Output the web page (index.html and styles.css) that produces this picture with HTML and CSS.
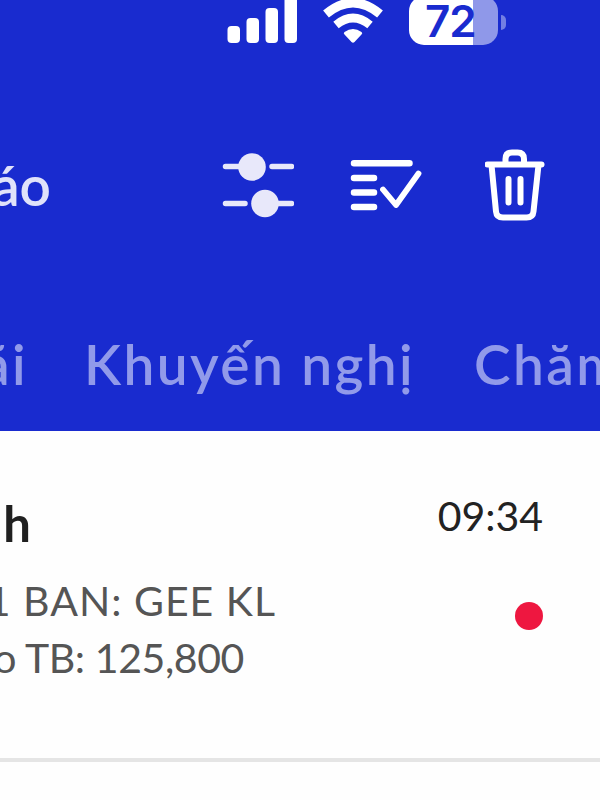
FILE: index.html
```
<!DOCTYPE html>
<html lang="vi">
<head>
    <meta charset="UTF-8">
    <title>Thông báo</title>
    <link rel="stylesheet" href="styles.css">
</head>
<body>
<div class="header">
    <div class="status-bar">
        <svg class="signal" width="70" height="60" viewBox="227 0 70 60" fill="#fff">
            <rect x="227.500" y="26" width="12.500" height="17" rx="4"/>
            <rect x="246.500" y="18" width="12.500" height="25" rx="4"/>
            <rect x="265.500" y="8" width="12.500" height="35" rx="4"/>
            <rect x="284.500" y="-4" width="12.500" height="47" rx="4"/>
        </svg>
        <svg class="wifi" width="62" height="60" viewBox="322 0 62 60">
            <path d="M326 14Q353 -8.500 380 14" fill="none" stroke="#fff" stroke-width="9" stroke-linejoin="round"/>
            <path d="M336 25Q353 11 370 25" fill="none" stroke="#fff" stroke-width="8.500"/>
            <path d="M344.500 34.500Q343 33 344.500 32Q353 26 361.500 32Q363 33 361.500 34.500L354.500 42Q353 43.500 351.500 42Z" fill="#fff"/>
        </svg>
        <div class="battery">
            <span class="battery-level">72</span>
            <span class="battery-cap"></span>
        </div>
    </div>
    <div class="toolbar">
        <span class="page-title">áo</span>
        <svg class="icon-filter" width="72" height="80" viewBox="222 145 72 80" fill="#e8e8fa" stroke="#e8e8fa" stroke-width="5.500" stroke-linecap="round">
            <path d="M225.500 166.500H245M272 166.500H291.500M225.500 203.500H245M270 203.500H291.500"/>
            <circle cx="252" cy="167" r="13.800" stroke="none"/>
            <circle cx="265" cy="203.500" r="13.800" stroke="none"/>
        </svg>
        <svg class="icon-read" width="72" height="80" viewBox="350 145 72 80" fill="none" stroke="#fff" stroke-width="6.500" stroke-linecap="round" stroke-linejoin="round">
            <path d="M354 163.300H409.500M354 178H374M354 192.500H374M354 207H374"/>
            <path d="M383 189.500L396 205L418.500 173.500" stroke-width="5.800"/>
        </svg>
        <svg class="icon-trash" width="60" height="80" viewBox="485 145 60 80" fill="none" stroke="#fff" stroke-width="6" stroke-linecap="round" stroke-linejoin="round">
            <path d="M487.500 164.500H541.500"/>
            <path d="M505.500 163V159Q505.500 152.500 512 152.500H517.500Q524 152.500 524 159V163"/>
            <path d="M491.500 165L496 211.500Q496.500 217.500 503 217.500H526.500Q533 217.500 533.500 211.500L538.500 165"/>
            <path d="M508.500 179V202.500M520.500 179V202.500"/>
        </svg>
    </div>
    <div class="tabs">
        <span class="tab tab-prev">ãi</span>
        <span class="tab tab-promo">Khuyến nghị</span>
        <span class="tab">Chăm</span>
    </div>
</div>
<div class="notice">
    <div class="notice-head">
        <span class="notice-title">h</span>
        <span class="notice-time">09:34</span>
    </div>
    <div class="notice-body">
        <div class="notice-text">
            <div class="line line-account">1 BAN: GEE KL</div>
            <div class="line line-amount">o TB: 125,800</div>
        </div>
        <span class="unread-dot"></span>
    </div>
</div>
</body>
</html>
```
FILE: styles.css
```
body {
    margin: 0;
    width: 600px;
    height: 800px;
    overflow: hidden;
    background: #fefefe;
    font-family: Lato, "Noto Sans", sans-serif;
}

svg {
    display: block;
    flex: none;
}

.header {
    height: 431px;
    overflow: hidden;
    background: #192bcf;
}

.status-bar {
    display: flex;
    height: 60px;
    padding-left: 227px;
}

.wifi {
    margin-left: 25px;
}

.battery {
    display: flex;
    align-items: center;
    height: 45px;
    margin-left: 25px;
}

.battery-level {
    box-sizing: border-box;
    width: 89px;
    height: 49px;
    margin-top: -4px;
    padding-left: 16px;
    border-radius: 15px;
    background: linear-gradient(to right, #fff 64px, #8f98e9 64px);
    color: #192bcf;
    font: 600 44px/50px Inter, sans-serif;
    letter-spacing: -1px;
}

.battery-cap {
    width: 5px;
    height: 15px;
    margin-left: 3px;
    border-radius: 0 8px 8px 0;
    background: #737fe3;
}

.toolbar {
    display: flex;
    align-items: center;
    height: 80px;
    padding-top: 85px;
}

.page-title {
    display: flex;
    justify-content: flex-end;
    width: 51px;
    margin-right: 171px;
    color: #e0e2fa;
    font-size: 55px;
    font-weight: 600;
    line-height: 80px;
}

.icon-read {
    margin-left: 56px;
}

.icon-trash {
    margin-left: 63px;
}

.tabs {
    display: flex;
    padding-top: 104px;
}

.tab {
    flex: none;
    color: #919aea;
    font-size: 55px;
    font-weight: 600;
    line-height: 70px;
    letter-spacing: 2.4px;
    white-space: nowrap;
}

.tab-prev {
    display: flex;
    justify-content: flex-end;
    width: 28px;
}

.tab-promo {
    box-sizing: border-box;
    width: 446px;
    padding-left: 56px;
}

.notice {
    box-sizing: border-box;
    height: 331px;
    padding: 55px 57px 0 0;
    border-bottom: 4px solid #e5e5e5;
}

.notice-head,
.notice-body {
    display: flex;
    justify-content: space-between;
}

.notice-head {
    height: 86px;
}

.notice-title {
    display: flex;
    justify-content: flex-end;
    width: 31px;
    color: #202020;
    font-size: 49px;
    font-weight: 700;
    line-height: 75px;
}

.notice-time {
    color: #222;
    font-size: 41px;
    line-height: 60px;
}

.line {
    display: flex;
    justify-content: flex-end;
    color: #555;
    font-size: 41px;
    line-height: 57px;
    white-space: nowrap;
}

.line-account {
    width: 276px;
    letter-spacing: 1px;
}

.line-amount {
    width: 244px;
    letter-spacing: -0.4px;
}

.unread-dot {
    width: 28px;
    height: 28px;
    margin-top: 30px;
    border-radius: 50%;
    background: #ee1740;
}
```
